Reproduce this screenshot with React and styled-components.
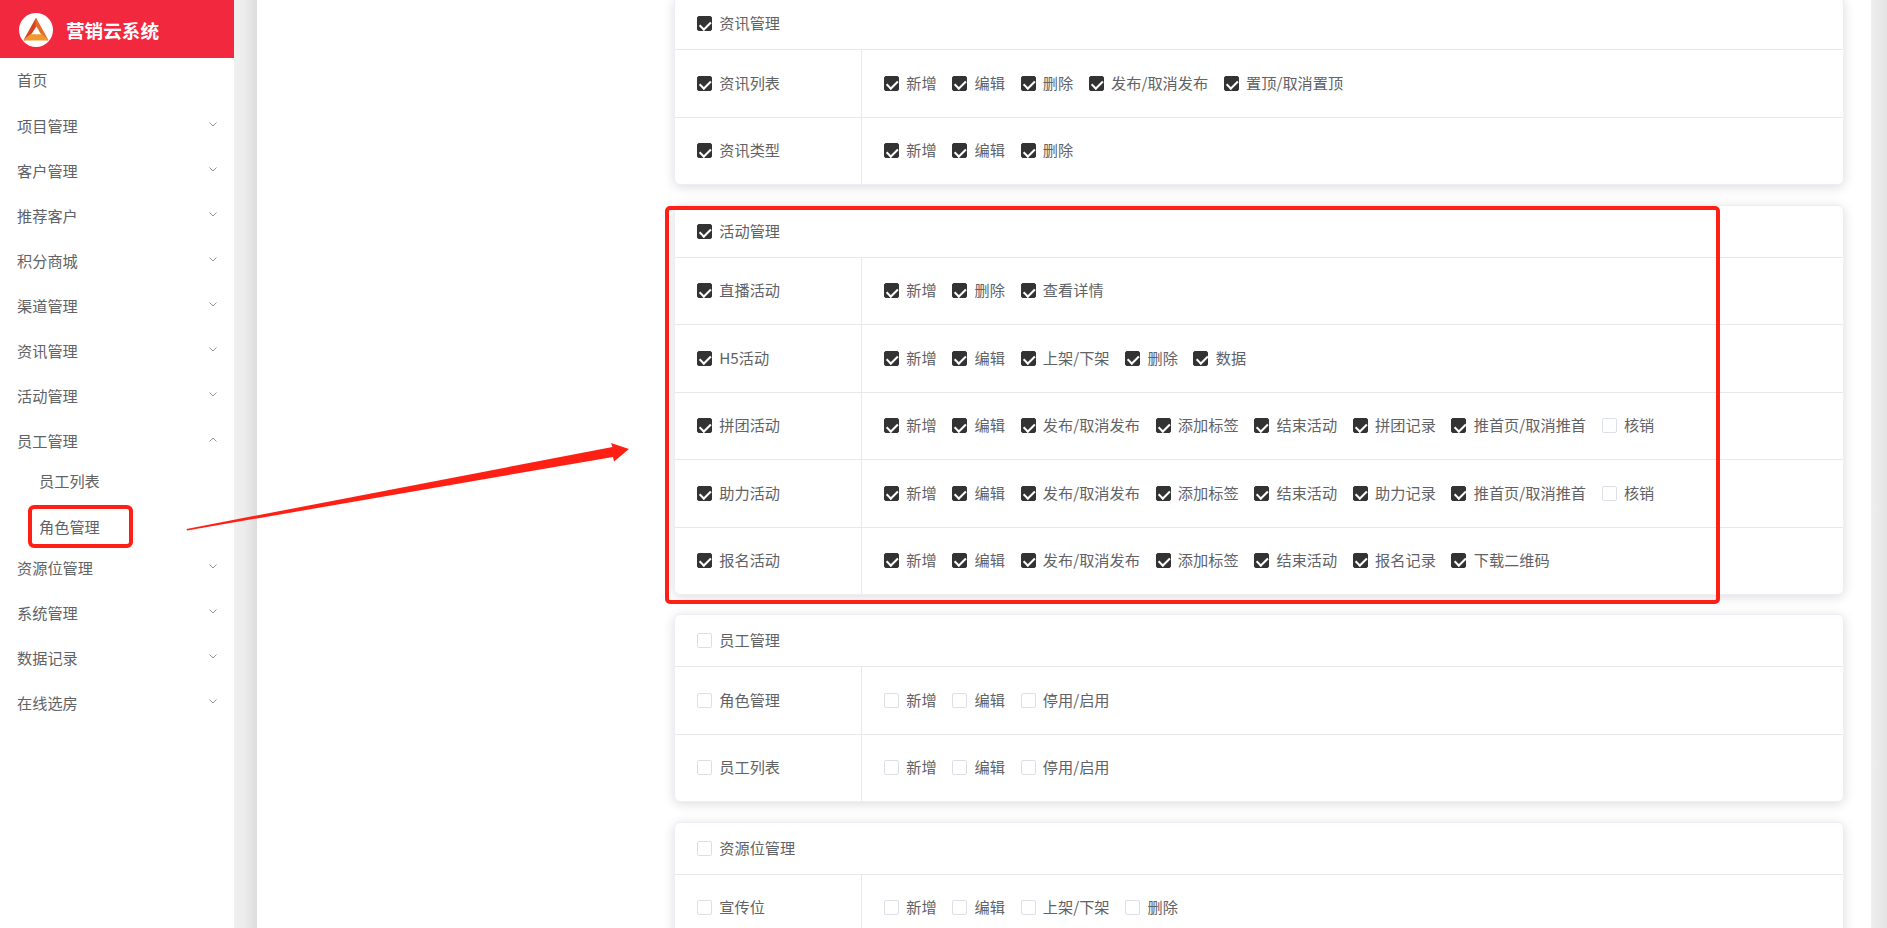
import React from 'react'
import styled, { createGlobalStyle } from 'styled-components'

const GlobalStyle = createGlobalStyle`
  html, body {
    margin: 0;
    height: 100%;
    overflow: hidden;
    background: #fff;
    font-family: "Noto Sans CJK SC", "Noto Sans", sans-serif;
    color: #606266;
  }
  * {
    box-sizing: border-box;
  }
`

const Page = styled.div`
  position: relative;
  display: flex;
  width: 100%;
  height: 100vh;
  overflow: hidden;
`

const Sidebar = styled.aside`
  flex: 0 0 234px;
  background: #fff;
`

const Brand = styled.div`
  display: flex;
  align-items: center;
  height: 58px;
  padding-left: 18px;
  gap: 12px;
  background: #f2283f;
  color: #fff;
  font-size: 18.6px;
  font-weight: 700;
  svg {
    margin-top: 2px;
  }
`

const MenuItem = styled.div`
  display: flex;
  align-items: center;
  justify-content: space-between;
  height: ${props => props.$height || 45}px;
  padding: 0 17px 4px;
  font-size: 15.2px;
  color: #606266;
`

const SubItem = styled.div`
  position: relative;
  display: flex;
  align-items: center;
  height: 41px;
  padding: 0 0 ${props => props.$lift || 0}px 39px;
  font-size: 15.2px;
  color: #606266;
`

const SubMark = styled.div`
  position: absolute;
  left: 28px;
  top: 0;
  width: 105px;
  height: 43px;
  border: 4px solid #ff2015;
  border-radius: 6px;
`

const Gutter = styled.div`
  flex: 0 0 23px;
  background: linear-gradient(to right, #f0f0f0 0%, #ececec 50%, #dcdcdc 100%);
`

const Main = styled.main`
  flex: 1;
  min-width: 0;
  padding: 0 27px 0 417px;
`

const CardList = styled.div`
  display: flex;
  flex-direction: column;
  gap: 19.8px;
  margin-top: -2.7px;
`

const Card = styled.section`
  position: relative;
  background: #fff;
  border: 1px solid #ebeef5;
  border-radius: 6px;
  box-shadow: 0 2px 12px rgba(0, 0, 0, 0.14);
`

const CardHead = styled.div`
  display: flex;
  align-items: center;
  height: 52px;
  padding-left: 22px;
  border-bottom: 1px solid #e8e8e8;
`

const Row = styled.div`
  display: flex;
  height: 67.5px;
  border-bottom: 1px solid #e8e8e8;
  &:last-of-type {
    height: 66px;
    border-bottom: 0;
  }
`

const RowName = styled.div`
  display: flex;
  align-items: center;
  flex: 0 0 187px;
  padding-left: 22px;
  border-right: 1px solid #e8e8e8;
`

const RowOptions = styled.div`
  display: flex;
  align-items: center;
  flex: 1;
  padding-left: 22px;
  gap: 15.6px;
`

const CheckItem = styled.label`
  display: inline-flex;
  align-items: center;
  gap: 7.3px;
  font-size: 15.2px;
  line-height: 20px;
  color: #606266;
  white-space: nowrap;
`

const CheckText = styled.span`
  padding-bottom: 3px;
`

const Box = styled.span`
  position: relative;
  flex: 0 0 15px;
  width: 15px;
  height: 15px;
  border-radius: 2px;
  background: ${props => (props.$on ? '#333' : '#fff')};
  border: 1px solid ${props => (props.$on ? '#333' : '#dcdfe6')};
  ${props => props.$on && `
    &::after {
      content: "";
      position: absolute;
      left: 4.2px;
      top: 1.2px;
      width: 4.5px;
      height: 8.5px;
      border: solid #fff;
      border-width: 0 2px 2px 0;
      transform: rotate(45deg);
    }
  `}
`

const CardMark = styled.span`
  position: absolute;
  left: -10px;
  top: 0;
  width: 1055px;
  height: 398.5px;
  border: 4px solid #ff2015;
  border-radius: 5px;
  pointer-events: none;
`

const ScrollTrack = styled.div`
  flex: 0 0 16px;
  background: linear-gradient(to right, #efefef, #e4e4e4);
`

const ArrowLayer = styled.svg`
  position: absolute;
  left: 0;
  top: 0;
  width: 1887px;
  height: 928px;
  pointer-events: none;
`

const Chevron = ({ up }) => (
  <svg width="8" height="5" viewBox="0 0 8 5" fill="none">
    <polyline
      points={up ? '0.5,4.5 4,1 7.5,4.5' : '0.5,0.5 4,4 7.5,0.5'}
      stroke="#909399"
      strokeWidth="1"
    />
  </svg>
)

const Logo = () => (
  <svg width="36" height="36" viewBox="0 0 36 36">
    <circle cx="18" cy="18" r="17" fill="#fff" />
    <g strokeWidth="1.4" strokeLinejoin="round">
      <polygon points="18,7 6.5,27.8 13.5,22.3 18.3,14.5" fill="#d8431f" stroke="#d8431f" />
      <polygon points="18,7 29.5,27.8 23,22.3 18.3,14.5" fill="#e66a2b" stroke="#e66a2b" />
      <polygon points="6.5,27.8 29.5,27.8 23,22.3 13.5,22.3" fill="#ef9a30" stroke="#ef9a30" />
    </g>
    <polygon points="18.3,14.5 13.5,22.3 23,22.3" fill="#fff" />
  </svg>
)

const Check = ({ on, children }) => (
  <CheckItem>
    <Box $on={on} />
    <CheckText>{children}</CheckText>
  </CheckItem>
)

const menu = ['项目管理', '客户管理', '推荐客户', '积分商城', '渠道管理', '资讯管理', '活动管理']
const menuAfter = ['资源位管理', '系统管理', '数据记录', '在线选房']

const cards = [
  {
    title: '资讯管理',
    on: true,
    rows: [
      { name: '资讯列表', options: ['新增', '编辑', '删除', '发布/取消发布', '置顶/取消置顶'] },
      { name: '资讯类型', options: ['新增', '编辑', '删除'] },
    ],
  },
  {
    title: '活动管理',
    on: true,
    marked: true,
    rows: [
      { name: '直播活动', options: ['新增', '删除', '查看详情'] },
      { name: 'H5活动', options: ['新增', '编辑', '上架/下架', '删除', '数据'] },
      {
        name: '拼团活动',
        options: ['新增', '编辑', '发布/取消发布', '添加标签', '结束活动', '拼团记录', '推首页/取消推首'],
        off: ['核销'],
      },
      {
        name: '助力活动',
        options: ['新增', '编辑', '发布/取消发布', '添加标签', '结束活动', '助力记录', '推首页/取消推首'],
        off: ['核销'],
      },
      { name: '报名活动', options: ['新增', '编辑', '发布/取消发布', '添加标签', '结束活动', '报名记录', '下载二维码'] },
    ],
  },
  {
    title: '员工管理',
    on: false,
    rows: [
      { name: '角色管理', options: ['新增', '编辑', '停用/启用'] },
      { name: '员工列表', options: ['新增', '编辑', '停用/启用'] },
    ],
  },
  {
    title: '资源位管理',
    on: false,
    rows: [
      { name: '宣传位', options: ['新增', '编辑', '上架/下架', '删除'] },
      { name: '', options: [] },
    ],
  },
]

const App = () => (
  <Page>
    <GlobalStyle />
    <Sidebar>
      <Brand>
        <Logo />
        营销云系统
      </Brand>
      <nav>
        <MenuItem $height={46}>首页</MenuItem>
        {menu.map(label => (
          <MenuItem key={label}>
            {label}
            <Chevron />
          </MenuItem>
        ))}
        <MenuItem>
          员工管理
          <Chevron up />
        </MenuItem>
        <SubItem $lift={9}>员工列表</SubItem>
        <SubItem>
          角色管理
          <SubMark />
        </SubItem>
        {menuAfter.map(label => (
          <MenuItem key={label}>
            {label}
            <Chevron />
          </MenuItem>
        ))}
      </nav>
    </Sidebar>
    <Gutter />
    <Main>
      <CardList>
        {cards.map(card => (
          <Card key={card.title}>
            <CardHead>
              <Check on={card.on}>{card.title}</Check>
            </CardHead>
            {card.rows.map((row, i) => (
              <Row key={i}>
                <RowName>{row.name && <Check on={card.on}>{row.name}</Check>}</RowName>
                <RowOptions>
                  {row.options.map(option => (
                    <Check key={option} on={card.on}>{option}</Check>
                  ))}
                  {row.off && row.off.map(option => (
                    <Check key={option}>{option}</Check>
                  ))}
                </RowOptions>
              </Row>
            ))}
            {card.marked && <CardMark />}
          </Card>
        ))}
      </CardList>
    </Main>
    <ScrollTrack />
    <ArrowLayer viewBox="0 0 1887 928">
      <polygon points="186.5,529 612.5,447 611,443 629,449 614,461.5 613,457 187,530.5" fill="#ff2015" />
    </ArrowLayer>
  </Page>
)

export default App
